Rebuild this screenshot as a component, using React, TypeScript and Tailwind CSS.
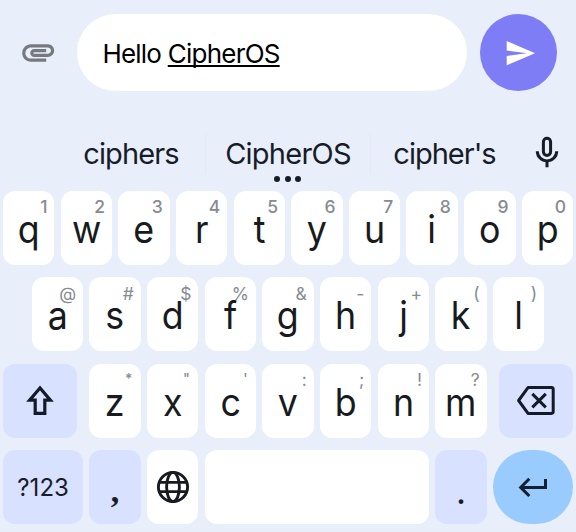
import React from "react";

type KeyDef = [string, string];

const ROW_ONE: KeyDef[] = [["q", "1"], ["w", "2"], ["e", "3"], ["r", "4"], ["t", "5"], ["y", "6"], ["u", "7"], ["i", "8"], ["o", "9"], ["p", "0"]];
const ROW_TWO: KeyDef[] = [["a", "@"], ["s", "#"], ["d", "$"], ["f", "%"], ["g", "&"], ["h", "-"], ["j", "+"], ["k", "("], ["l", ")"]];
const ROW_THREE: KeyDef[] = [["z", "*"], ["x", '"'], ["c", "'"], ["v", ":"], ["b", ";"], ["n", "!"], ["m", "?"]];

function hintStyle(hint: string) {
  if (hint === "*" || hint === '"' || hint === "'") return "top-[4px] right-[8.5px] text-[14px] font-medium";
  if (/[0-9]/.test(hint)) return "top-[5px] right-[7px] text-[17.5px] font-medium";
  return "top-[5.5px] right-[7px] text-[17.5px]";
}

function LetterKey({ letter, hint }: { letter: string; hint: string }) {
  return (
    <button className="relative h-[74px] w-[51.4px] shrink-0 rounded-[12px] bg-white text-center text-[38.5px] leading-[76px] text-[#171b20]">
      <span className="block origin-center scale-x-[0.93]">{letter}</span>
      <span className={`absolute leading-[22px] text-[#868b91] ${hintStyle(hint)}`}>{hint}</span>
    </button>
  );
}

function Letters({ keys }: { keys: KeyDef[] }) {
  return (
    <div className="flex gap-[6.25px]">
      {keys.map(([letter, hint]) => (
        <LetterKey key={letter} letter={letter} hint={hint} />
      ))}
    </div>
  );
}

function Suggestion({ children, className }: { children: React.ReactNode; className: string }) {
  return <div className={`flex items-center justify-center whitespace-nowrap pt-[2px] text-[29px] text-[#171c26] ${className}`}>{children}</div>;
}

export default function App() {
  return (
    <div className="h-[532px] w-[576px] overflow-hidden bg-[#e8effb] font-['Inter',sans-serif]">
      <header className="flex items-start pt-[14.2px]">
        <svg className="mt-[19px] ml-[19px] size-[38.4px] shrink-0" viewBox="0 0 24 24" fill="#77797e">
          <path d="M2 12.5C2 9.46 4.46 7 7.5 7H18c2.21 0 4 1.79 4 4s-1.79 4-4 4H9.5C8.12 15 7 13.88 7 12.5S8.12 10 9.5 10H17v2H9.41c-.55 0-.55 1 0 1H18c1.1 0 2-.9 2-2s-.9-2-2-2H7.5C5.57 9 4 10.57 4 12.5S5.57 16 7.5 16H17v2H7.5C4.46 18 2 15.54 2 12.5z" />
        </svg>
        <div className="ml-[19.6px] flex h-[76.5px] w-[390px] items-center rounded-full bg-white pt-[2px] pl-[25.4px] text-[26px] tracking-[-0.77px] whitespace-pre text-black">
          <span>Hello </span>
          <span className="underline decoration-[1.5px] underline-offset-[2px] [text-decoration-skip-ink:none]">CipherOS</span>
        </div>
        <button className="ml-[13px] flex size-[77px] items-center justify-center rounded-full bg-[#7f7df5]">
          <svg className="mt-px ml-1 size-[32.4px]" viewBox="0 0 24 24" fill="white">
            <path d="M2.01 21L23 12 2.01 3 2 10l15 2-15 2z" />
          </svg>
        </button>
      </header>

      <div className="mt-[24px] flex h-[76px] items-start pl-[57px]">
        <Suggestion className="h-[76px] w-[148px] tracking-[-0.9px]">ciphers</Suggestion>
        <div className="mt-[18px] h-[40px] w-px bg-[#e2e9f7]" />
        <div className="relative">
          <Suggestion className="h-[76px] w-[164px] tracking-[-0.75px]">CipherOS</Suggestion>
          <div className="absolute bottom-[9px] left-[68px] flex gap-[4.5px]">
            <span className="size-[6px] rounded-full bg-[#171c26]" />
            <span className="size-[6px] rounded-full bg-[#171c26]" />
            <span className="size-[6px] rounded-full bg-[#171c26]" />
          </div>
        </div>
        <div className="mt-[18px] h-[40px] w-px bg-[#e2e9f7]" />
        <Suggestion className="h-[76px] w-[147px] tracking-[-1px]">cipher's</Suggestion>
        <svg className="mt-[21px] ml-[17px] h-[32px] w-[24px]" viewBox="0 0 24 32" fill="none" stroke="#171c26" strokeWidth="3">
          <rect x="8.4" y="2.2" width="7.2" height="17.2" rx="3.6" />
          <path d="M2.3 15.2a9.7 9.7 0 0 0 19.4 0M12 25v6.2" />
        </svg>
      </div>

      <div className="flex flex-col gap-[12.3px] px-[3px]">
        <Letters keys={ROW_ONE} />
        <div className="flex justify-center">
          <Letters keys={ROW_TWO} />
        </div>
        <div className="flex justify-between">
          <button className="flex h-[74px] w-[74px] items-center justify-center rounded-[12px] bg-[#d8e1ff]">
            <svg className="size-[32px]" viewBox="0 0 32 32" fill="none" stroke="#141b27" strokeWidth="3.2">
              <path d="M16 3 5.6 15.2H11.2V28.4H20.8V15.2H26.4Z" />
            </svg>
          </button>
          <Letters keys={ROW_THREE} />
          <button className="flex h-[74px] w-[74px] items-center justify-center rounded-[12px] bg-[#d8e1ff]">
            <svg className="h-[32px] w-[40px]" viewBox="0 0 40 32" fill="none" stroke="#141b27" strokeWidth="3" strokeLinejoin="round">
              <path d="M12 2.6H35.4Q37.2 2.6 37.2 4.4V26.6Q37.2 28.4 35.4 28.4H12L2.6 15.5Z" />
              <path d="m16.3 8.9 13.5 13.5M29.8 8.9 16.3 22.4" />
            </svg>
          </button>
        </div>
        <div className="flex gap-[6.2px]">
          <button className="h-[74px] w-[80.2px] shrink-0 rounded-[12px] bg-[#d8e1ff] pt-[2px] text-[24px] text-[#171c26]">?123</button>
          <button className="h-[74px] w-[51.4px] shrink-0 rounded-[12px] bg-[#d8e1ff] pt-[4px] font-['Liberation_Serif',serif] text-[34px] leading-[74px] font-bold text-[#171c26]">,</button>
          <button className="flex h-[74px] w-[51.4px] shrink-0 items-center justify-center rounded-[12px] bg-white">
            <svg className="size-[34px]" viewBox="0 0 34 34" fill="none" stroke="#171b20" strokeWidth="2.9">
              <circle cx="17" cy="17" r="14.6" />
              <ellipse cx="17" cy="17" rx="6.4" ry="14.6" />
              <path d="M3 12.4H31M3 21.6H31" />
            </svg>
          </button>
          <button aria-label="Space" className="h-[74px] flex-1 rounded-[12px] bg-white" />
          <button className="h-[74px] w-[51.4px] shrink-0 rounded-[12px] bg-[#d8e1ff] pt-[4px] font-['Liberation_Serif',serif] text-[40px] leading-[74px] text-[#171c26]">.</button>
          <button className="flex h-[74px] w-[80px] shrink-0 items-center justify-center rounded-[37px] bg-[#9acbff]">
            <svg className="h-[22px] w-[30px]" viewBox="0 0 30 22" fill="none" stroke="#142030" strokeWidth="3">
              <path d="M27.5 3V11.5H3M11.3 2.8 2.7 11.4 11.3 20" />
            </svg>
          </button>
        </div>
      </div>
    </div>
  );
}
